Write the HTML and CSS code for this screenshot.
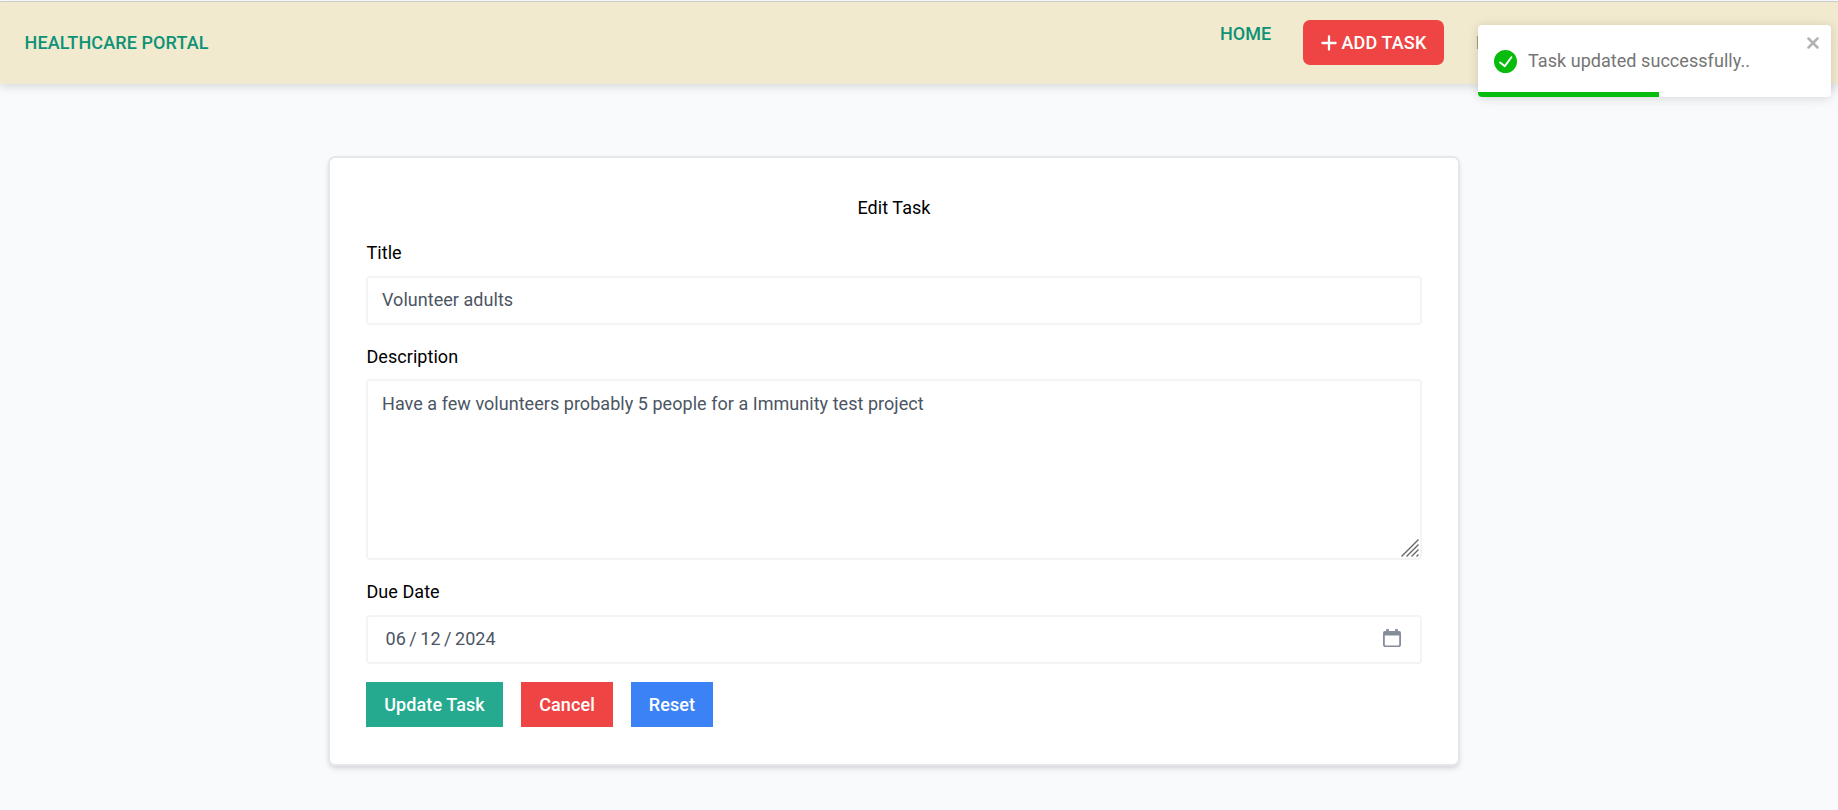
FILE: index.html
```html
<!DOCTYPE html>
<html lang="en">
<head>
<meta charset="utf-8">
<title>Healthcare Portal</title>
<link rel="stylesheet" href="styles.css">
</head>
<body>
<header class="navbar">
  <a class="brand">HEALTHCARE PORTAL</a>
  <nav class="links">
    <a class="link">HOME</a>
    <a class="add-task"><svg class="plus" viewBox="0 0 16 16" width="16" height="16"><path d="M8 1.400v13.200M1.400 8h13.200" stroke="currentColor" stroke-width="2.300" stroke-linecap="round" fill="none"/></svg>ADD TASK</a>
    <a class="account">L</a>
  </nav>
</header>
<main class="page">
  <form class="card">
    <h1 class="heading">Edit Task</h1>
    <label class="label" for="title">Title</label>
    <input class="field" id="title" type="text" value="Volunteer adults">
    <label class="label tight" for="description">Description</label>
    <div class="area-wrap">
      <textarea class="field area" id="description">Have a few volunteers probably 5 people for a Immunity test project</textarea>
      <svg class="grip" viewBox="0 0 18 18" width="18" height="18"><path d="M.5 17.500l17-17M5.500 17.500l12-12M10.500 17.500l7-7M15.500 17.500l2-2" stroke="#666" stroke-width="1.400" fill="none"/></svg>
    </div>
    <label class="label">Due Date</label>
    <div class="field date">
      <span class="date-value"><span>06</span><span>/</span><span>12</span><span>/</span><span>2024</span></span>
      <svg class="calendar" viewBox="0 0 18 18" width="18" height="18"><path d="M2 2h1.200V0h2.600v2h6.400V0h2.600v2H16a2 2 0 0 1 2 2v12a2 2 0 0 1-2 2H2a2 2 0 0 1-2-2V4a2 2 0 0 1 2-2zM1.800 6.500v8.900a1 1 0 0 0 1 1h12.400a1 1 0 0 0 1-1V6.500z" fill="#868d9a" fill-rule="evenodd"/></svg>
    </div>
    <div class="actions">
      <button class="btn update" type="button">Update Task</button>
      <button class="btn cancel" type="button">Cancel</button>
      <button class="btn reset" type="button">Reset</button>
    </div>
  </form>
</main>
<div class="toast">
  <svg class="check" viewBox="0 0 24 24" width="23" height="23"><path d="M12 0a12 12 0 1 0 12 12A12.014 12.014 0 0 0 12 0zm6.927 8.200-6.845 9.289a1.011 1.011 0 0 1-1.430.188l-4.888-3.908a1 1 0 1 1 1.250-1.562l4.076 3.261 6.227-8.451a1 1 0 1 1 1.610 1.183z" fill="#07bc0c"/></svg>
  <span class="toast-text">Task updated successfully..</span>
  <svg class="close" viewBox="0 0 12 12" width="12" height="12"><path d="M1.500 1.500l9 9M10.500 1.500l-9 9" stroke="#b3b3b3" stroke-width="2.500" stroke-linecap="round" fill="none"/></svg>
  <div class="progress"></div>
</div>
</body>
</html>
```
FILE: styles.css
```css
* { box-sizing: border-box; }
body {
  margin: 0;
  height: 810px;
  overflow: hidden;
  padding-top: 1px;
  background: #f9fafc;
  font-family: Roboto, sans-serif;
  font-size: 18px;
  line-height: 27px;
  letter-spacing: .05px;
  color: #000;
}
.navbar {
  display: flex;
  align-items: flex-start;
  justify-content: space-between;
  height: 83px;
  padding: 18px 0 0 24.500px;
  border-top: 1px solid #cccccc;
  background: #f1eacf;
  box-shadow: 0 4px 8px rgba(0,0,0,.11);
  font-weight: 500;
  color: #0d9276;
}
.brand { padding-top: 9px; letter-spacing: .11px; }
.links { display: flex; align-items: flex-start; width: 618px; }
.link { width: 83px; }
.add-task {
  display: flex;
  align-items: center;
  width: 141px;
  height: 45px;
  padding-left: 18px;
  border-radius: 7px;
  background: #ef4444;
  color: #fff;
  letter-spacing: .13px;
}
.plus { margin-right: 4.500px; }
.account { padding: 9px 0 0 32px; }
.page { padding: 72px 0 0 328px; }
.card {
  display: block;
  width: 1132px;
  height: 610px;
  padding: 36px;
  border: 2px solid #e5e7eb;
  border-radius: 7px;
  background: #fff;
  box-shadow: 0 4px 6px -1px rgba(0,0,0,.1), 0 2px 4px -1px rgba(0,0,0,.07);
}
.heading { margin: 0 0 18px; font-size: 18px; font-weight: 400; text-align: center; }
.label { display: block; margin-bottom: 10px; padding-left: .5px; }
.tight { margin-bottom: 9px; }
.field {
  display: block;
  width: 100%;
  height: 49px;
  margin: 0 0 18px;
  padding: 8px 14px 10px;
  border: 2px solid #f3f4f6;
  border-radius: 4px;
  background: #fff;
  font: inherit;
  letter-spacing: .04px;
  color: #4b5563;
  outline: none;
}
.area-wrap { position: relative; margin-bottom: 18px; }
.area { height: 181px; margin: 0; padding-top: 9px; resize: none; }
.grip { position: absolute; right: 3px; bottom: 3px; }
.date { display: flex; align-items: center; justify-content: space-between; padding: 0 19px 2px 17.500px; }
.date-value { display: flex; gap: 3.500px; }
.calendar { margin-top: -2px; }
.actions { display: flex; gap: 18px; }
.btn {
  height: 45px;
  padding: 0;
  border: 0;
  font: inherit;
  font-weight: 500;
  letter-spacing: .1px;
  color: #fff;
}
.update { width: 137px; background: #25aa8f; }
.cancel { width: 92px; background: #ef4444; }
.reset { width: 82px; background: #3b82f6; }
.toast {
  position: absolute;
  left: 1478px;
  top: 25px;
  display: flex;
  align-items: center;
  width: 353px;
  height: 72px;
  padding-left: 16px;
  overflow: hidden;
  border-radius: 4px;
  background: #fff;
  color: #757575;
  box-shadow: 0 1px 10px rgba(0,0,0,.1), 0 2px 15px rgba(0,0,0,.05);
}
.toast-text { padding: 0 0 2px 11px; }
.close { position: absolute; right: 12px; top: 12px; }
.progress { position: absolute; left: 0; bottom: 0; width: 181px; height: 5px; background: #07bc0c; }
```
